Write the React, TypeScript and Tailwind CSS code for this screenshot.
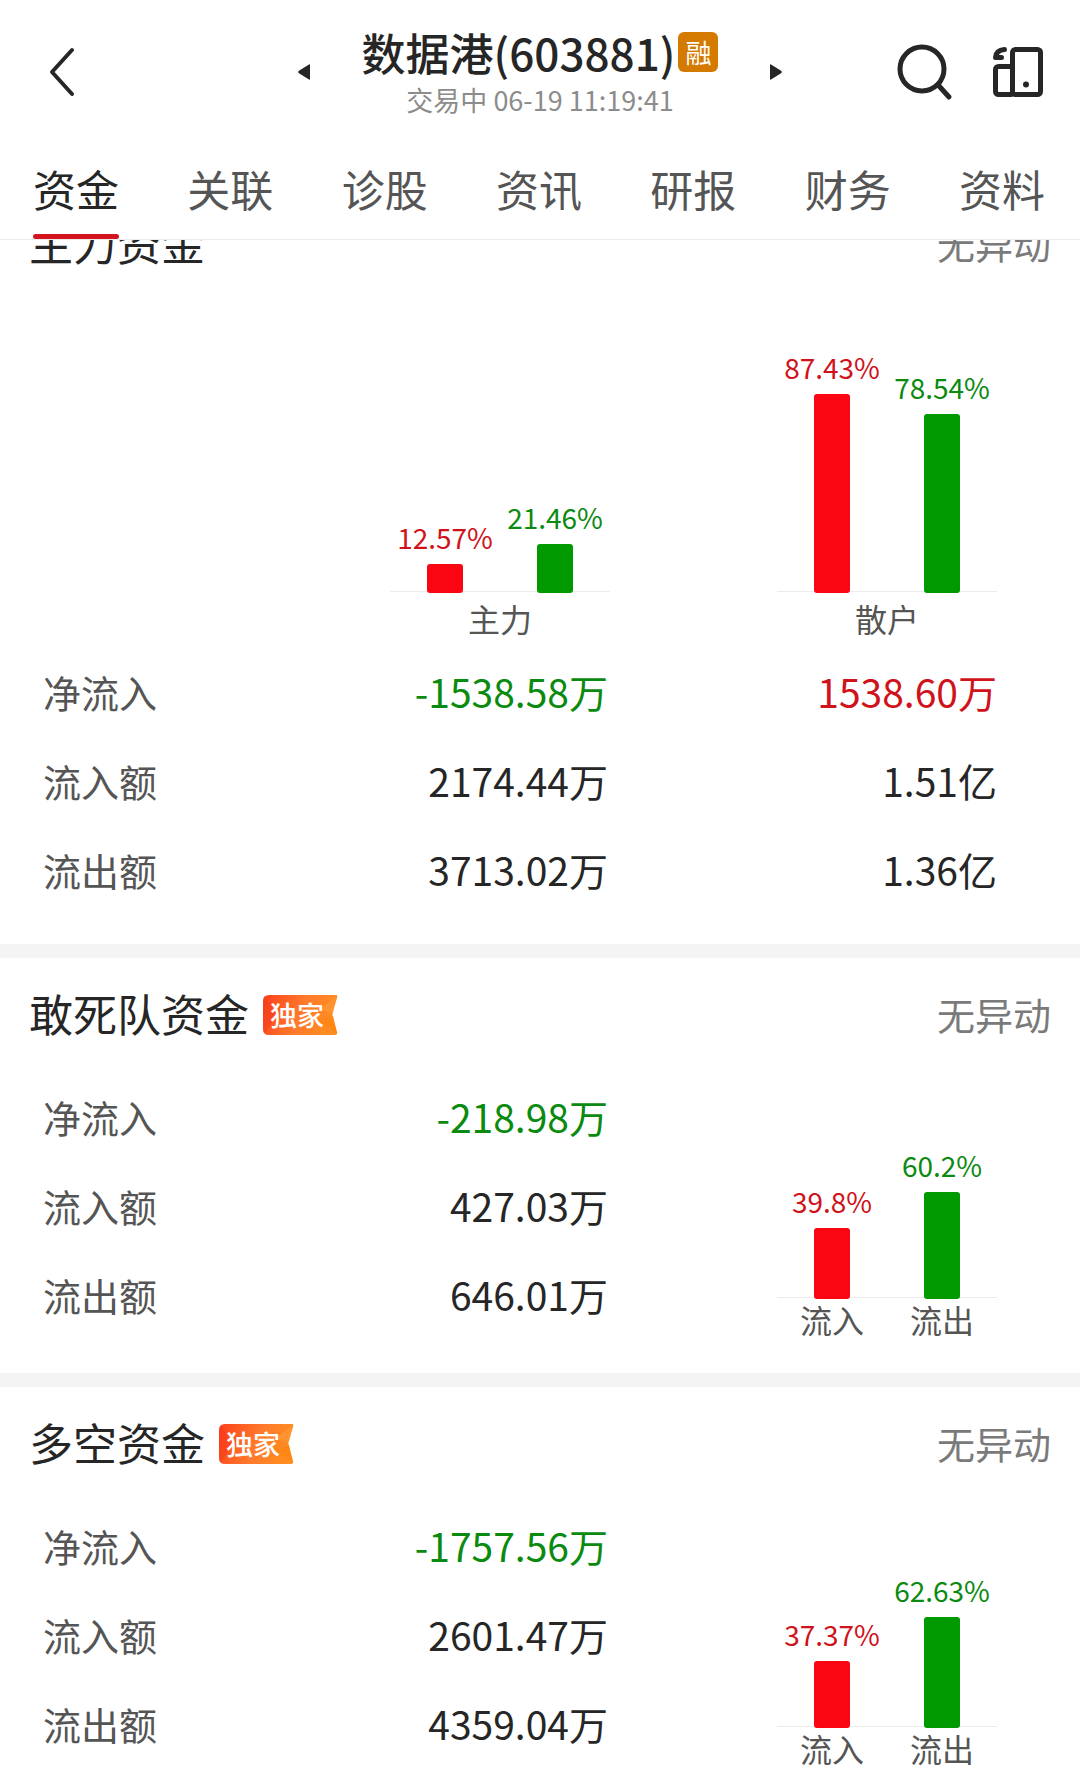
import { clsx } from "clsx";

type Tone = "up" | "down" | "plain";

type Bar = { value: number; tone: "up" | "down"; label?: string };

type Row = { name: string; values: { text: string; tone: Tone }[] };

const tabs = ["资金", "关联", "诊股", "资讯", "研报", "财务", "资料"];

const textTone: Record<Tone, string> = {
  up: "text-[#d0121b]",
  down: "text-[#0b8a10]",
  plain: "text-[#262626]",
};

const mainRows: Row[] = [
  { name: "净流入", values: [{ text: "-1538.58万", tone: "down" }, { text: "1538.60万", tone: "up" }] },
  { name: "流入额", values: [{ text: "2174.44万", tone: "plain" }, { text: "1.51亿", tone: "plain" }] },
  { name: "流出额", values: [{ text: "3713.02万", tone: "plain" }, { text: "1.36亿", tone: "plain" }] },
];

const squadRows: Row[] = [
  { name: "净流入", values: [{ text: "-218.98万", tone: "down" }] },
  { name: "流入额", values: [{ text: "427.03万", tone: "plain" }] },
  { name: "流出额", values: [{ text: "646.01万", tone: "plain" }] },
];

const longShortRows: Row[] = [
  { name: "净流入", values: [{ text: "-1757.56万", tone: "down" }] },
  { name: "流入额", values: [{ text: "2601.47万", tone: "plain" }] },
  { name: "流出额", values: [{ text: "4359.04万", tone: "plain" }] },
];

function PortfolioIcon() {
  return (
    <svg width="52" height="52" viewBox="0 0 52 52" fill="none" stroke="#262626" strokeWidth="5" strokeLinejoin="round">
      <rect x="20.5" y="3.5" width="28" height="45" rx="3" />
      <path d="M20.5 20.5H6.5a3 3 0 0 0-3 3v22a3 3 0 0 0 3 3h14" />
      <circle cx="34" cy="38.5" r="3" fill="#262626" stroke="none" />
      <path d="M12.500 3.500C7 4 3.800 6.500 3.500 11.500H9.500" strokeLinecap="round" />
    </svg>
  );
}

function ExclusiveTag() {
  return (
    <span className="relative flex h-10 w-[75px] items-center pl-[7px] text-[27px] leading-10 font-medium text-white">
      <svg className="absolute inset-0" width="75" height="40" viewBox="0 0 75 40" aria-hidden="true">
        <defs>
          <linearGradient id="tag" x1="0" y1="0.4" x2="1" y2="0.6">
            <stop offset="0" stopColor="#fb471d" />
            <stop offset="0.5" stopColor="#ff7a2c" />
            <stop offset="1" stopColor="#ff8f1f" />
          </linearGradient>
        </defs>
        <path d="M6 0H73Q75 0 74 3L70 16Q69 19 70 22L74 37Q75 40 72 40H6Q0 40 0 34V6Q0 0 6 0Z" fill="url(#tag)" />
        <path d="M2 2L14 20L2 38Q0 37 0 34V6Q0 3 2 2Z" fill="#f5341a" opacity="0.4" />
        <path d="M74 1L56 15L70 18Z" fill="#ff9a3a" opacity="0.6" />
        <path d="M74 39L56 26L70 21Z" fill="#ff8410" opacity="0.7" />
      </svg>
      <span className="relative">独家</span>
    </span>
  );
}

function BarPair({ bars, scale, caption }: { bars: Bar[]; scale: number; caption?: string }) {
  return (
    <div className="w-[220px] text-center">
      <div className="relative flex items-end">
        <div className="absolute inset-x-0 bottom-px h-px bg-[#ebebeb]" />
        {bars.map((bar) => (
          <div key={bar.tone} className="relative flex flex-1 flex-col items-center gap-[11px]">
            <span className={clsx("text-[28px] leading-8 whitespace-nowrap", textTone[bar.tone])}>{bar.value}%</span>
            <div
              className={clsx("w-9 rounded-[3px]", bar.tone === "up" ? "bg-[#fa0613]" : "bg-[#009900]")}
              style={{ height: Math.round(bar.value * scale) }}
            />
          </div>
        ))}
      </div>
      {caption ? (
        <p className="pt-0.5 text-[32px] leading-[46px] text-[#555]">{caption}</p>
      ) : (
        <div className="flex text-[32px] leading-10 text-[#555]">
          {bars.map((bar) => (
            <span key={bar.tone} className="flex-1">{bar.label}</span>
          ))}
        </div>
      )}
    </div>
  );
}

function FundTable({ rows }: { rows: Row[] }) {
  return (
    <table className="w-full table-fixed leading-[57px]">
      <tbody>
        {rows.map((row) => (
          <tr key={row.name} className="h-[89px]">
            <th scope="row" className="w-[150px] text-left text-[38px] font-normal whitespace-nowrap text-[#555]">
              {row.name}
            </th>
            {row.values.map((value, i) => (
              <td
                key={i}
                className={clsx(
                  "text-right text-[39px] whitespace-nowrap",
                  textTone[value.tone],
                  row.values.length > 1 && i === 0 && "w-[415px]"
                )}
              >
                {value.text}
              </td>
            ))}
          </tr>
        ))}
      </tbody>
    </table>
  );
}

function SectionHead({ title, exclusive }: { title: string; exclusive?: boolean }) {
  return (
    <div className="mb-1 flex h-[110px] items-center px-[29px]">
      <h2 className="text-[44px] leading-[64px] text-[#262626]">{title}</h2>
      {exclusive && (
        <span className="mt-1 ml-[14px]">
          <ExclusiveTag />
        </span>
      )}
      <span className="ml-auto text-[38px] leading-[57px] text-[#7a7a7a]">无异动</span>
    </div>
  );
}

function SplitSection({ title, rows, bars }: { title: string; rows: Row[]; bars: Bar[] }) {
  return (
    <section className="pb-[34px]">
      <SectionHead title={title} exclusive />
      <div className="grid grid-cols-[565fr_389fr] items-end pr-[83px] pl-[43px]">
        <FundTable rows={rows} />
        <div className="flex justify-end">
          <BarPair bars={bars} scale={1.78} />
        </div>
      </div>
    </section>
  );
}

export default function App() {
  return (
    <div className="min-h-screen bg-white font-['Noto_Sans_CJK_SC',sans-serif]">
      <header className="border-b border-[#ebebeb] bg-white">
        <div className="grid h-36 grid-cols-[1fr_484px_1fr] items-center px-9">
          <button type="button" aria-label="返回" className="p-3">
            <svg width="28" height="50" viewBox="0 0 28 50" fill="none" stroke="#262626" strokeWidth="4" strokeLinecap="round" strokeLinejoin="round">
              <path d="M24 3L4 25L24 47" />
            </svg>
          </button>
          <div className="flex items-center justify-between">
            <button type="button" aria-label="上一只">
              <svg width="12" height="16" viewBox="0 0 12 16" fill="#262626">
                <path d="M12 1v14q0 1-1 .5L.5 9Q0 8 .5 7L11 .5q1-.5 1 .5z" />
              </svg>
            </button>
            <div className="flex flex-col items-center pt-0.5">
              <div className="flex items-center gap-[3px]">
                <h1 className="text-[44px] leading-[54px] font-medium whitespace-nowrap text-[#262626]">数据港(603881)</h1>
                <span className="flex size-10 items-center justify-center rounded-md bg-[#d57a00] text-[26px] leading-10 text-white">融</span>
              </div>
              <p className="text-[27px] leading-[42px] whitespace-nowrap text-[#8c8c8c]">交易中 06-19 11:19:41</p>
            </div>
            <button type="button" aria-label="下一只">
              <svg width="12" height="16" viewBox="0 0 12 16" fill="#262626">
                <path d="M0 1v14q0 1 1 .5L11.500 9q.5-1 0-2L1 .5Q0 0 0 1z" />
              </svg>
            </button>
          </div>
          <div className="flex items-center justify-end gap-[38px]">
            <button type="button" aria-label="搜索">
              <svg width="58" height="58" viewBox="0 0 58 58" fill="none" stroke="#262626" strokeWidth="5" strokeLinecap="round">
                <circle cx="26" cy="26" r="22" />
                <path d="M43 43L53 54" />
              </svg>
            </button>
            <button type="button" aria-label="自选">
              <PortfolioIcon />
            </button>
          </div>
        </div>
        <nav className="flex justify-between pr-[35px] pl-[33px]">
          {tabs.map((tab, i) => (
            <a
              key={tab}
              href="#"
              className={clsx(
                "relative h-[95px] text-[43px] leading-[88px] whitespace-nowrap",
                i === 0 ? "text-[#262626]" : "text-[#555]"
              )}
            >
              {tab}
              {i === 0 && <span className="absolute inset-x-0 bottom-0 h-[5px] rounded-full bg-[#d3131d]" />}
            </a>
          ))}
        </nav>
      </header>

      {/* scrolled so the first heading is partly cut off by the tab bar */}
      <main className="overflow-hidden">
        <div className="-mt-[53px] divide-y-[14px] divide-[#f4f4f4]">
          <section className="pb-[30px]">
            <SectionHead title="主力资金" />
            <div className="grid grid-cols-[347fr_220px_167fr_220px] items-end pt-[50px] pr-[83px] pl-[43px]">
              <span />
              <BarPair
                scale={2.28}
                caption="主力"
                bars={[{ value: 12.57, tone: "up" }, { value: 21.46, tone: "down" }]}
              />
              <span />
              <BarPair
                scale={2.28}
                caption="散户"
                bars={[{ value: 87.43, tone: "up" }, { value: 78.54, tone: "down" }]}
              />
            </div>
            <div className="pt-1.5 pr-[83px] pl-[43px]">
              <FundTable rows={mainRows} />
            </div>
          </section>
          <SplitSection
            title="敢死队资金"
            rows={squadRows}
            bars={[{ value: 39.8, tone: "up", label: "流入" }, { value: 60.2, tone: "down", label: "流出" }]}
          />
          <SplitSection
            title="多空资金"
            rows={longShortRows}
            bars={[{ value: 37.37, tone: "up", label: "流入" }, { value: 62.63, tone: "down", label: "流出" }]}
          />
        </div>
      </main>
    </div>
  );
}
